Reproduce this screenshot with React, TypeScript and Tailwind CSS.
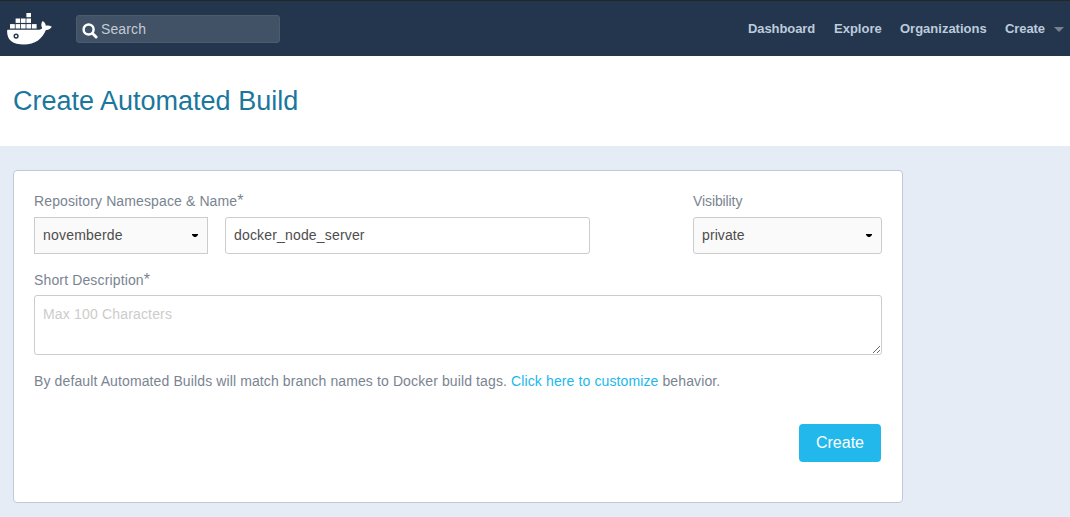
import React from "react";

function DockerLogo() {
  return (
    <svg width="46" height="34" viewBox="7 12 46 34" className="block shrink-0" aria-hidden="true">
      <g fill="#fff">
        <rect x="26.4" y="13" width="4.6" height="4.2" />
        <rect x="15.6" y="18.5" width="4.6" height="4.4" />
        <rect x="21" y="18.5" width="4.6" height="4.4" />
        <rect x="26.4" y="18.5" width="4.6" height="4.4" />
        <rect x="10" y="24.1" width="4.8" height="4.4" />
        <rect x="15.6" y="24.1" width="4.6" height="4.4" />
        <rect x="21" y="24.1" width="4.6" height="4.4" />
        <rect x="26.4" y="24.1" width="4.6" height="4.4" />
        <rect x="31.8" y="24.1" width="4.8" height="4.4" />
        <path d="M8 29.8H38.2C40.2 29.8 41.7 29.1 42.2 28C40.8 25.8 41 23.1 42.7 21.1C44.6 22.4 45.6 23.9 45.8 25.7C47.8 25.2 50 25.5 51.8 26.8C50.8 28.9 48.6 30 45.9 29.9C42.2 38.8 35 44.5 24 44.5C12.8 44.5 7.2 40.2 7.1 31.5C7.1 30.4 7.3 29.8 8 29.8Z" />
      </g>
      <circle cx="16.1" cy="36.1" r="1.9" fill="#fff" stroke="#24364d" strokeWidth="1.4" />
    </svg>
  );
}

function SearchIcon() {
  return (
    <svg width="16" height="16" viewBox="0 0 16 16" fill="none" stroke="#fff" className="block shrink-0" aria-hidden="true">
      <circle cx="6.6" cy="6.5" r="5" strokeWidth="2.5" />
      <path d="M10.6 10.5L14.1 14" strokeWidth="2.9" strokeLinecap="round" />
    </svg>
  );
}

function SelectBox({ value, className }: { value: string; className: string }) {
  return (
    <button type="button" className={`flex h-[37px] items-center justify-between border border-[#ccc] bg-[#fafafa] pb-[2px] pl-2 pr-[9px] text-[#4d4d4d] ${className}`}>
      <span>{value}</span>
      <svg width="6" height="3" viewBox="0 0 6 3" className="mt-[2px] block" aria-hidden="true">
        <path d="M0 0H6V1L4 3H2L0 1Z" fill="#000" />
      </svg>
    </button>
  );
}

function Label({ children, required }: { children: React.ReactNode; required?: boolean }) {
  return (
    <div className="flex h-[21px] items-start leading-[21px] text-[#7a8491]">
      <span>{children}</span>
      {required && <span className="-mt-px text-base leading-[21px]">*</span>}
    </div>
  );
}

const links = [
  { name: "Dashboard", width: "w-[68px] tracking-[-0.08px]" },
  { name: "Explore", width: "w-[48px]" },
  { name: "Organizations", width: "w-[87px]" },
];

export default function App() {
  return (
    <div className="flex h-[517px] w-full flex-col overflow-hidden bg-[#e5ecf5] font-['Liberation_Sans',Arial,sans-serif] text-sm">
      <header className="flex h-14 shrink-0 items-center border-t border-[#252628] bg-[#24364d] pl-[7px] pr-[6px] pt-px">
        <DockerLogo />
        <div className="ml-[23px] flex h-7 w-[204px] items-center gap-[3px] rounded-[3px] border border-[#4b5d6d] bg-[#415166] pl-[5px] text-[#c4cbd3]">
          <span className="mt-[3px]"><SearchIcon /></span>
          <span className="tracking-[0.12px]">Search</span>
        </div>
        <nav className="ml-auto flex items-center gap-[18px] text-[13px] font-bold text-[#bccbdc]">
          {links.map((link) => (
            <a key={link.name} className={`whitespace-nowrap ${link.width}`}>{link.name}</a>
          ))}
          <a className="flex items-center">
            <span className="w-[39px] tracking-[-0.1px]">Create</span>
            <svg width="10" height="5" viewBox="0 0 10 5" className="ml-[10px] block" aria-hidden="true">
              <path d="M0 0H10L5 5Z" fill="#76838f" />
            </svg>
          </a>
        </nav>
      </header>

      <div className="flex h-[90px] shrink-0 items-center bg-white pl-[13px]">
        <h1 className="text-[27px] leading-9 text-[#1b779c]">Create Automated Build</h1>
      </div>

      <main className="pl-[13px] pt-6">
        <form className="flex h-[333px] w-[890px] flex-col rounded border border-[#c0c9d8] bg-white px-5 pt-5">
          <div className="flex items-start">
            <div className="tracking-[0.12px]">
              <Label required>Repository Namespace &amp; Name</Label>
              <div className="mt-[5px] flex">
                <SelectBox value="novemberde" className="w-[174px] tracking-[0.2px]" />
                <input
                  defaultValue="docker_node_server"
                  className="ml-[17px] h-[37px] w-[365px] rounded-[3px] border border-[#ccc] bg-white px-2 pb-[2px] tracking-[0.17px] text-[#4d4d4d] outline-none"
                />
              </div>
            </div>
            <div className="ml-auto">
              <div className="tracking-[-0.1px]">
                <Label>Visibility</Label>
              </div>
              <SelectBox value="private" className="mt-[5px] w-[189px] rounded-[3px] tracking-[0.1px]" />
            </div>
          </div>
          <div className="mt-4 tracking-[0.14px]">
            <Label required>Short Description</Label>
            <textarea
              placeholder="Max 100 Characters"
              className="mt-[4px] block h-[60px] w-full rounded-[3px] border border-[#ccc] bg-white px-2 py-2 leading-5 tracking-[0.17px] outline-none placeholder:text-[#ccc]"
            />
          </div>
          <p className="mt-4 leading-5 tracking-[0.116px] text-[#7a8491]">
            By default Automated Builds will match branch names to Docker build tags.{" "}
            <a className="text-[#22b8eb]">Click here to customize</a> behavior.
          </p>
          <button type="button" className="mt-[33px] h-[38px] w-[82px] self-end rounded bg-[#22b8eb] text-base text-white mr-px">
            Create
          </button>
        </form>
      </main>
    </div>
  );
}
